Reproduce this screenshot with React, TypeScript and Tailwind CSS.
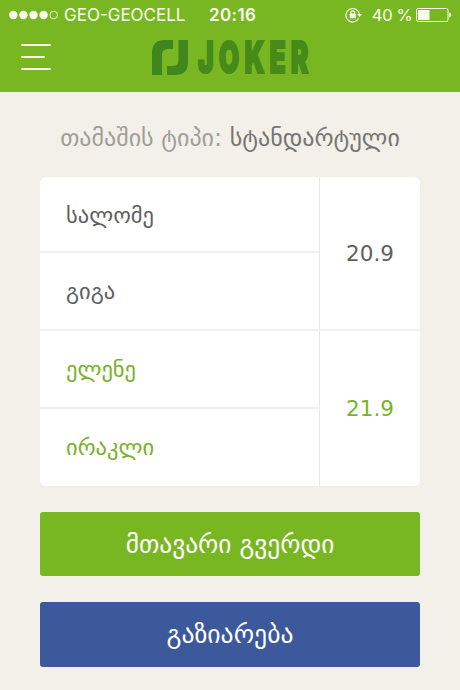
const teams = [
  { players: ["სალომე", "გიგა"], score: "20.9", winner: false },
  { players: ["ელენე", "ირაკლი"], score: "21.9", winner: true },
];

function StatusBar() {
  return (
    <div className="grid h-[30px] grid-cols-[200px_1fr_auto] items-center pl-[9px] pr-[8px] font-['Inter',sans-serif] text-[17px] leading-[30px] text-[#fafff0]">
      <div className="flex items-center">
        <svg width="50" height="10" viewBox="0 0 50 10" fill="currentColor">
          <circle cx="4.3" cy="5" r="4.2" />
          <circle cx="14.4" cy="5" r="4.2" />
          <circle cx="24.5" cy="5" r="4.2" />
          <circle cx="34.6" cy="5" r="4.2" />
          <circle cx="44.7" cy="5" r="3.8" fill="none" stroke="currentColor" strokeWidth="0.8" />
        </svg>
        <span className="ml-[5px] whitespace-nowrap">GEO-GEOCELL</span>
      </div>
      <span className="font-semibold tracking-[0.4px]">20:16</span>
      <div className="flex items-center">
        <svg width="17" height="16" viewBox="0 0 17 16" fill="none" stroke="currentColor" strokeWidth="1.1">
          <path d="M13.6 11.6A6.8 6.8 0 1 1 14.4 7.4" />
          <path d="M12 6.9h5l-2.5 3z" fill="currentColor" stroke="none" />
          <path d="M5.9 7.2V5.7a1.8 1.8 0 0 1 3.6 0v1.5" />
          <rect x="4.7" y="6.4" width="6" height="4.9" rx="0.5" fill="currentColor" stroke="none" />
        </svg>
        <span className="ml-[10px] whitespace-nowrap text-[16.5px] tracking-[-0.3px]">40 %</span>
        <svg className="ml-[3.5px]" width="36" height="14" viewBox="0 0 36 14">
          <rect x="0.5" y="0.5" width="31.5" height="13" rx="1.8" fill="none" stroke="currentColor" />
          <rect x="2" y="2" width="11.5" height="10" rx="0.5" fill="currentColor" />
          <path d="M33.2 4.5c1.4.5 2 1.3 2 2.5s-.6 2-2 2.5z" fill="currentColor" />
        </svg>
      </div>
    </div>
  );
}

function Header() {
  return (
    <header className="h-[92px] bg-[#79b722]">
      <StatusBar />
      <div className="flex h-[54px] items-center pl-[21px]">
        <button className="flex w-[131px] flex-col gap-[10.5px]" aria-label="Menu">
          <span className="h-[1.5px] w-[30px] rounded-full bg-[#fafff0]" />
          <span className="h-[1.5px] w-[24px] rounded-full bg-[#fafff0]" />
          <span className="h-[1.5px] w-[30px] rounded-full bg-[#fafff0]" />
        </button>
        <svg className="mt-[1px]" width="36" height="35" viewBox="0 0 36 35" fill="#3f861e">
          <path d="M0 35V13Q0 0 13 0h8v9h-5Q10 9 10 15v20z" />
          <path d="M26.5 0H36v22q0 13-13 13h-8v-9h6q5.5 0 5.5-6z" />
        </svg>
        <div className="ml-[10px] h-[34px] w-[112px]">
          <span className="block origin-left scale-x-[0.6] font-['Inter',sans-serif] text-[44px] leading-[34px] font-black tracking-[8.5px] text-[#468a19] [-webkit-text-stroke:2px_#468a19]">
            JOKER
          </span>
        </div>
      </div>
    </header>
  );
}

export default function App() {
  return (
    <div className="h-[690px] w-[460px] overflow-hidden bg-[#f3f0ea] font-['DejaVu_Sans',sans-serif]">
      <Header />
      <main className="px-[40px]">
        <h1 className="flex h-[85px] items-center justify-center pt-[6px] text-[24px] whitespace-pre text-[#a09e99]">
          თამაშის ტიპი: <span className="text-[#777571]">სტანდარტული</span>
        </h1>

        {/* Score table */}
        <div className="overflow-hidden rounded-md bg-white text-[22.5px]">
          {teams.map((team) => (
            <div
              key={team.score}
              className={`grid grid-cols-[280px_1fr] border-[#f0f0f0] ${
                team.winner ? "h-[155px] text-[#79b12d]" : "h-[154px] border-b-2 text-[#606060]"
              }`}
            >
              <div className="grid grid-rows-2 border-r border-[#e9e9e9]">
                {team.players.map((player, i) => (
                  <div
                    key={player}
                    className={`flex items-center border-[#f0f0f0] pl-[26px] ${i === 0 ? "border-b-2 pt-[3px]" : "pt-[1px]"}`}
                  >
                    {player}
                  </div>
                ))}
              </div>
              <div className="flex items-center justify-center pt-[2px] text-[21.5px]">{team.score}</div>
            </div>
          ))}
        </div>

        <button className="mt-[26px] h-[64px] w-full rounded-[3px] bg-[#79b722] pt-[1px] text-[25.4px] text-white">
          მთავარი გვერდი
        </button>
        <button className="mt-[26px] h-[65px] w-full rounded-[3px] bg-[#3c599b] text-[25.7px] text-white">
          გაზიარება
        </button>
      </main>
    </div>
  );
}
